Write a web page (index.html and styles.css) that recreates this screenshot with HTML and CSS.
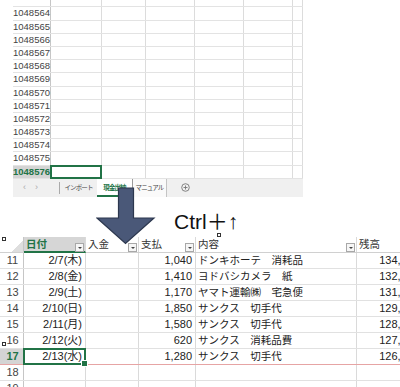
FILE: index.html
```html
<!DOCTYPE html>
<html lang="ja">
<head>
<meta charset="UTF-8">
<title>Ctrl + ↑</title>
<link rel="stylesheet" href="styles.css">
</head>
<body>

<!-- bottom of the sheet, last row -->
<div class="top">
  <div class="trow lead"><span class="rh"></span><span class="c1"></span><span class="c2"></span><span class="c3"></span><span class="c4"></span><span class="c5"></span><span class="c6"></span></div>
  <div class="trow"><span class="rh">1048564</span><span class="c1"></span><span class="c2"></span><span class="c3"></span><span class="c4"></span><span class="c5"></span><span class="c6"></span></div>
  <div class="trow"><span class="rh">1048565</span><span class="c1"></span><span class="c2"></span><span class="c3"></span><span class="c4"></span><span class="c5"></span><span class="c6"></span></div>
  <div class="trow"><span class="rh">1048566</span><span class="c1"></span><span class="c2"></span><span class="c3"></span><span class="c4"></span><span class="c5"></span><span class="c6"></span></div>
  <div class="trow"><span class="rh">1048567</span><span class="c1"></span><span class="c2"></span><span class="c3"></span><span class="c4"></span><span class="c5"></span><span class="c6"></span></div>
  <div class="trow"><span class="rh">1048568</span><span class="c1"></span><span class="c2"></span><span class="c3"></span><span class="c4"></span><span class="c5"></span><span class="c6"></span></div>
  <div class="trow"><span class="rh">1048569</span><span class="c1"></span><span class="c2"></span><span class="c3"></span><span class="c4"></span><span class="c5"></span><span class="c6"></span></div>
  <div class="trow"><span class="rh">1048570</span><span class="c1"></span><span class="c2"></span><span class="c3"></span><span class="c4"></span><span class="c5"></span><span class="c6"></span></div>
  <div class="trow"><span class="rh">1048571</span><span class="c1"></span><span class="c2"></span><span class="c3"></span><span class="c4"></span><span class="c5"></span><span class="c6"></span></div>
  <div class="trow"><span class="rh">1048572</span><span class="c1"></span><span class="c2"></span><span class="c3"></span><span class="c4"></span><span class="c5"></span><span class="c6"></span></div>
  <div class="trow"><span class="rh">1048573</span><span class="c1"></span><span class="c2"></span><span class="c3"></span><span class="c4"></span><span class="c5"></span><span class="c6"></span></div>
  <div class="trow"><span class="rh">1048574</span><span class="c1"></span><span class="c2"></span><span class="c3"></span><span class="c4"></span><span class="c5"></span><span class="c6"></span></div>
  <div class="trow"><span class="rh">1048575</span><span class="c1"></span><span class="c2"></span><span class="c3"></span><span class="c4"></span><span class="c5"></span><span class="c6"></span></div>
  <div class="trow"><span class="rh sel">1048576</span><span class="c1 active"></span><span class="c2"></span><span class="c3"></span><span class="c4"></span><span class="c5"></span><span class="c6"></span></div>
</div>

<!-- sheet tabs -->
<div class="tabs">
  <div class="nav"><span>&#8249;</span><span>&#8250;</span></div>
  <div class="tab">インポート</div>
  <div class="tab current">現金出納</div>
  <div class="tab plain">マニュアル</div>
  <div class="add">
    <svg width="9" height="9" viewBox="0 0 9 9">
      <circle cx="4.5" cy="4.5" r="3.8" fill="none" stroke="#777" stroke-width="0.9"/>
      <path d="M 4.5,2.5 L 4.5,6.5 M 2.5,4.5 L 6.5,4.5" stroke="#777" stroke-width="0.9"/>
    </svg>
  </div>
</div>

<div class="caption">Ctrl＋↑</div>

<!-- table after the jump -->
<div class="grid">
  <div class="grow ghead">
    <div class="g-rh"><span class="corner"></span></div>
    <div class="g-b hcur"><span>日付</span><i class="dd"></i></div>
    <div class="g-c"><span>入金</span><i class="dd"></i></div>
    <div class="g-d"><span>支払</span><i class="dd"></i></div>
    <div class="g-e"><span>内容</span><i class="dd"></i></div>
    <div class="g-f"><span>残高</span><i class="dd"></i></div>
  </div>
  <div class="grow"><div class="g-rh">11</div><div class="g-b">2/7(木)</div><div class="g-c"></div><div class="g-d">1,040</div><div class="g-e">ドンキホーテ　消耗品</div><div class="g-f">134,560</div></div>
  <div class="grow"><div class="g-rh">12</div><div class="g-b">2/8(金)</div><div class="g-c"></div><div class="g-d">1,410</div><div class="g-e">ヨドバシカメラ　紙</div><div class="g-f">132,150</div></div>
  <div class="grow"><div class="g-rh">13</div><div class="g-b">2/9(土)</div><div class="g-c"></div><div class="g-d">1,170</div><div class="g-e">ヤマト運輸㈱　宅急便</div><div class="g-f">131,980</div></div>
  <div class="grow"><div class="g-rh">14</div><div class="g-b">2/10(日)</div><div class="g-c"></div><div class="g-d">1,850</div><div class="g-e">サンクス　切手代</div><div class="g-f">129,130</div></div>
  <div class="grow"><div class="g-rh">15</div><div class="g-b">2/11(月)</div><div class="g-c"></div><div class="g-d">1,580</div><div class="g-e">サンクス　切手代</div><div class="g-f">128,550</div></div>
  <div class="grow"><div class="g-rh">16</div><div class="g-b">2/12(火)</div><div class="g-c"></div><div class="g-d">620</div><div class="g-e">サンクス　消耗品費</div><div class="g-f">127,930</div></div>
  <div class="grow last"><div class="g-rh rsel">17</div><div class="g-b active">2/13(水)</div><div class="g-c"></div><div class="g-d">1,280</div><div class="g-e">サンクス　切手代</div><div class="g-f">126,650</div></div>
  <div class="grow"><div class="g-rh">18</div><div class="g-b"></div><div class="g-c"></div><div class="g-d"></div><div class="g-e"></div><div class="g-f"></div></div>
  <div class="grow"><div class="g-rh">19</div><div class="g-b"></div><div class="g-c"></div><div class="g-d"></div><div class="g-e"></div><div class="g-f"></div></div>
</div>

<!-- overlays: arrow and table handles -->
<svg class="arrow" width="60" height="60" viewBox="0 0 60 60">
  <polygon points="22.5,1 37.5,1 37.5,31 58,31 29.5,56.5 1,31 22.5,31" fill="#4a5878" stroke="#2c374e" stroke-width="1.2"/>
</svg>
<span class="handle h1"></span>
<span class="handle h2"></span>
<span class="handle h3"></span>

</body>
</html>
```

FILE: styles.css
```css
* {
  box-sizing: border-box;
}
body {
  margin: 0;
  width: 400px;
  height: 387px;
  overflow: hidden;
  position: relative;
  background: #fff;
  font-family: "Liberation Sans", "Noto Sans CJK JP", sans-serif;
  color: #222;
}

/* top sheet */
.top {
  margin-left: 13px;
  width: 290px;
}
.trow {
  display: flex;
  height: 13.2px;
  border-bottom: 1px solid #e3e3e3;
}
.trow.lead {
  height: 7.4px;
}
.trow > span {
  flex: none;
  height: 100%;
  border-right: 1px solid #dcdcdc;
}
.rh {
  width: 38px;
  padding-right: 2px;
  text-align: right;
  font-size: 9.5px;
  line-height: 12px;
  color: #444;
  border-right-color: #c6c6c6 !important;
}
.rh.sel {
  background: #d4d4d4;
  color: #217346;
  font-weight: bold;
}
.c1 { width: 51px; }
.c2 { width: 44px; }
.c3 { width: 49px; }
.c4 { width: 49px; }
.c5 { width: 49px; }
.c6 { width: 10px; }
.active {
  position: relative;
}
.active::after {
  content: "";
  position: absolute;
  left: -1px;
  top: -1px;
  right: -1px;
  bottom: -1px;
  border: 2px solid #217346;
}

/* sheet tabs */
.tabs {
  display: flex;
  margin-left: 13px;
  width: 290px;
  height: 18px;
  background: #f0f0f0;
  font-family: "Noto Sans CJK JP", sans-serif;
  font-size: 6.5px;
  letter-spacing: -0.9px;
  white-space: nowrap;
  color: #444;
}
.nav {
  width: 47px;
  display: flex;
  gap: 9px;
  padding-left: 10px;
  margin: 3px 0;
  color: #aaa;
  font-family: "Liberation Sans", sans-serif;
  font-size: 9px;
  letter-spacing: 0;
  line-height: 11px;
  border-right: 1px solid #aaa;
}
.tab {
  width: 37px;
  text-align: center;
  line-height: 17px;
  overflow: hidden;
}
.tab.current {
  width: 35px;
  background: #fff;
  color: #217346;
  font-weight: bold;
  border-bottom: 2px solid #217346;
  line-height: 16px;
}
.tab.plain {
  width: 35px;
  background: #fafafa;
  border-left: 1px solid #9a9a9a;
  border-right: 1px solid #c4c4c4;
}
.add {
  padding-left: 14px;
  padding-top: 4px;
}

/* caption */
.caption {
  height: 40px;
  padding: 13px 0 0 174px;
  font-size: 21px;
  line-height: 24px;
  color: #111;
}

/* bottom table */
.grow {
  display: flex;
  height: 16px;
  border-bottom: 1px solid #e1e1e1;
  font-size: 11px;
  line-height: 15px;
}
.grow > div {
  flex: none;
  border-right: 1px solid #dadada;
  white-space: nowrap;
}
.g-rh {
  width: 24px;
  padding-left: 2px;
  text-align: center;
  color: #444;
  border-right-color: #c6c6c6 !important;
}
.g-b { width: 62px; text-align: right; padding-right: 3px; }
.g-c { width: 53px; }
.g-d { width: 57px; text-align: right; padding-right: 3px; }
.g-e { width: 161px; padding-left: 2px; font-size: 10.5px; }
.g-f { width: 83px; text-align: right; padding-right: 20px; }

.ghead {
  border-bottom-color: #d0d0d0;
}
.ghead > div {
  display: flex;
  justify-content: space-between;
  text-align: left;
  padding: 0 1px 0 2px;
  font-size: 10.5px;
  color: #333;
}
.ghead .g-rh {
  justify-content: flex-end;
  padding: 0;
}
.ghead .hcur {
  background: #d6d6d6;
  color: #217346;
  font-weight: bold;
  border-bottom: 2px solid #217346;
  margin-bottom: -1px;
}
.corner {
  width: 11px;
  height: 11px;
  margin-top: 4px;
  background: linear-gradient(to bottom right, transparent 50%, #dedede 50%);
}
.dd {
  width: 9px;
  height: 9px;
  margin-top: 6px;
  border: 1px solid #a8a8a8;
  background: #f6f6f6;
  position: relative;
}
.dd::after {
  content: "";
  position: absolute;
  left: 2px;
  top: 3px;
  border-left: 2px solid transparent;
  border-right: 2px solid transparent;
  border-top: 2px solid #444;
}
.rsel {
  background: #d4d4d4;
  color: #217346;
  font-weight: bold;
}
.last {
  border-bottom-color: #e6a4a4;
}
.grow .active::before {
  content: "";
  position: absolute;
  right: -3px;
  bottom: -3px;
  width: 5px;
  height: 5px;
  background: #217346;
  border: 1px solid #fff;
  z-index: 2;
}

/* overlays */
.arrow {
  position: absolute;
  left: 96px;
  top: 187px;
}
.handle {
  position: absolute;
  width: 4px;
  height: 4px;
  border: 1px solid #333;
  background: #fff;
}
.h1 { left: 2px; top: 237px; }
.h2 { left: 2px; top: 342px; }
.h3 { left: 217px; top: 233px; }
```
